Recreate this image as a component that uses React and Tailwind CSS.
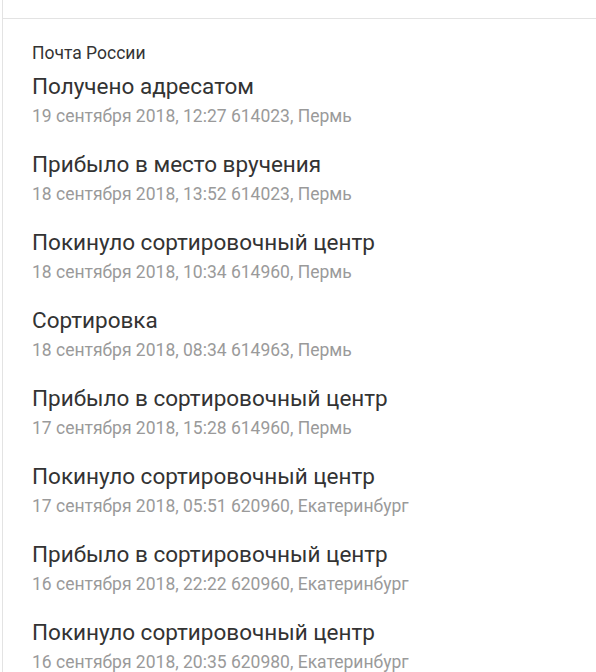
import React from 'react';

const events = [
  ['Получено адресатом', '19 сентября 2018, 12:27 614023, Пермь'],
  ['Прибыло в место вручения', '18 сентября 2018, 13:52 614023, Пермь'],
  ['Покинуло сортировочный центр', '18 сентября 2018, 10:34 614960, Пермь'],
  ['Сортировка', '18 сентября 2018, 08:34 614963, Пермь'],
  ['Прибыло в сортировочный центр', '17 сентября 2018, 15:28 614960, Пермь'],
  ['Покинуло сортировочный центр', '17 сентября 2018, 05:51 620960, Екатеринбург'],
  ['Прибыло в сортировочный центр', '16 сентября 2018, 22:22 620960, Екатеринбург'],
  ['Покинуло сортировочный центр', '16 сентября 2018, 20:35 620980, Екатеринбург'],
];

export default function App() {
  return (
    <div className="h-[672px] w-[596px] overflow-hidden bg-white font-['Roboto',sans-serif]">
      <div className="ml-[2px] h-full border-l border-[#e3e3e3]">
        <div className="h-[19px] border-b border-[#e3e3e3]" />
        <div className="pl-[29px] pt-[24px]">
          <div className="h-[20px] text-[17.5px] leading-[20px] text-[#333]">Почта России</div>
          <div className="mt-[9px] flex flex-col gap-[23px]">
            {events.map(([title, date], i) => (
              <div key={i}>
                <div className="h-[28px] text-[22.5px] leading-[28px] text-[#333]">{title}</div>
                <div className="mt-[5px] h-[22px] text-[17.5px] leading-[22px] text-[#9a9a9a]">{date}</div>
              </div>
            ))}
          </div>
        </div>
      </div>
    </div>
  );
}
